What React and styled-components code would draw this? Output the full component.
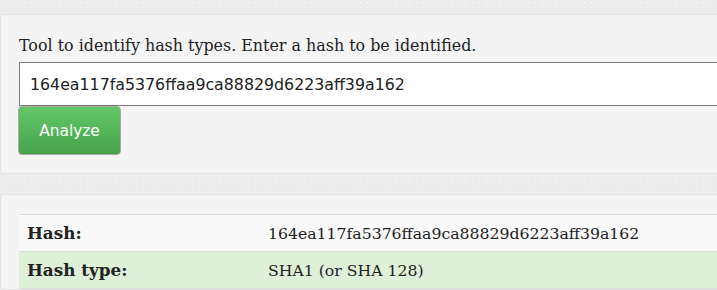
import React from "react";
import styled, { createGlobalStyle } from "styled-components";

const Global = createGlobalStyle`
  html, body { margin: 0; padding: 0; }
  body {
    background-color: #ececec;
    background-image:
      radial-gradient(rgba(255,255,255,0.55) 0.6px, transparent 0.9px),
      radial-gradient(rgba(0,0,0,0.05) 0.6px, transparent 0.9px);
    background-size: 7px 5px, 11px 9px;
    background-position: 0 0, 3px 2px;
    font-family: "DejaVu Serif", Georgia, serif;
    color: #222;
    overflow: hidden;
  }
`;

const Page = styled.div`
  padding-top: 14px;
  display: flex;
  flex-direction: column;
  gap: 20px;
  width: 760px;
`;

const Panel = styled.section`
  background: #f4f4f4;
  border: 1px solid #e2e2e2;
  border-radius: 4px;
  padding: ${(p) => p.$pad};
`;

const Label = styled.div`
  font-family: "DejaVu Serif", Georgia, serif;
  font-size: 15.9px;
  line-height: 20px;
  color: #222;
  margin-bottom: 6px;
`;

const HashInput = styled.input`
  display: block;
  box-sizing: border-box;
  width: 740px;
  height: 44px;
  margin: 0;
  padding: 0 10px;
  border: 1px solid #7a7a7a;
  background: #fff;
  font-family: "DejaVu Sans", Verdana, sans-serif;
  font-size: 15.8px;
  color: #222;
  outline: none;
`;

const Button = styled.button`
  display: block;
  box-sizing: border-box;
  margin: 0 0 0 -1px;
  width: 103px;
  height: 49px;
  border: 1px solid #a9a9a9;
  border-radius: 4px;
  background: linear-gradient(#62c868, #47a24c);
  color: #fff;
  font-family: "DejaVu Sans", Verdana, sans-serif;
  font-size: 15.4px;
  padding: 0;
  cursor: pointer;
`;

const Table = styled.table`
  border-collapse: collapse;
  width: 740px;
`;

const Row = styled.tr`
  background: ${(p) => (p.$success ? "#dff0d8" : "#f9f9f9")};
`;

const Cell = styled.td`
  border-top: 1px solid #dddddd;
  border-bottom: 1px solid #dddddd;
  height: 37px;
  padding: 0 8px;
  box-sizing: border-box;
  font-family: "DejaVu Serif", Georgia, serif;
  font-size: ${(p) => (p.$head ? "16.8px" : "15.7px")};
  font-weight: ${(p) => (p.$head ? 700 : 400)};
  width: ${(p) => p.$w || "auto"};
  color: #222;
  white-space: nowrap;
`;

export default function App() {
  const hash = "164ea117fa5376ffaa9ca88829d6223aff39a162";
  return (
    <>
      <Global />
      <Page>
        <Panel $pad="21px 0 18px 18px">
          <Label>Tool to identify hash types. Enter a hash to be identified.</Label>
          <HashInput defaultValue={hash} readOnly />
          <Button>Analyze</Button>
        </Panel>
        <Panel $pad="19px 0 0 18px">
          <Table>
            <tbody>
              <Row>
                <Cell $head $w="241px">Hash:</Cell>
                <Cell>{hash}</Cell>
              </Row>
              <Row $success>
                <Cell $head $w="241px">Hash type:</Cell>
                <Cell>SHA1 (or SHA 128)</Cell>
              </Row>
            </tbody>
          </Table>
        </Panel>
      </Page>
    </>
  );
}
